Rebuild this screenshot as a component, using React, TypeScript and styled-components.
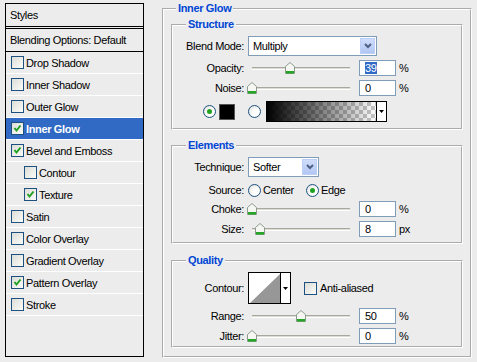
import React from 'react';
import styled, { createGlobalStyle } from 'styled-components';

const GlobalStyle = createGlobalStyle`
  html, body {
    margin: 0;
    padding: 0;
  }
  body {
    background: #ececec;
    font-family: "Liberation Sans", Arial, sans-serif;
    font-size: 11px;
    letter-spacing: -0.35px;
    color: #000;
  }
`;

const Dialog = styled.div`
  width: 477px;
  height: 362px;
  box-sizing: border-box;
  padding: 2px 0 0 5px;
  display: flex;
  align-items: flex-start;
  overflow: hidden;
`;

/* ---------- left list ---------- */

const StylesPanel = styled.div`
  margin-top: 1px;
  width: 139px;
  height: 354px;
  box-sizing: border-box;
  border: 1px solid #000;
  display: flex;
  flex-direction: column;
`;

const PanelHead = styled.div`
  height: 22px;
  line-height: 22px;
  padding-left: 4px;
  border-bottom: 1px solid #000;
  margin-bottom: 1px;
`;

const BlendRow = styled.div`
  height: 22px;
  line-height: 22px;
  padding-left: 4px;
  border-top: 1px solid #000;
  border-bottom: 1px solid #000;
`;

const StyleItem = styled.div<{ $indent?: boolean; $active?: boolean }>`
  height: 21px;
  border-bottom: 1px solid #fff;
  display: flex;
  align-items: center;
  gap: 2px;
  padding-left: ${(p) => (p.$indent ? 18 : 5)}px;
  background: ${(p) => (p.$active ? '#316ac5' : 'transparent')};
  color: ${(p) => (p.$active ? '#fff' : '#000')};
  font-weight: ${(p) => (p.$active ? 'bold' : 'normal')};
`;

const CheckBox = styled.span`
  width: 13px;
  height: 13px;
  box-sizing: border-box;
  border: 1px solid #1c5180;
  background: linear-gradient(135deg, #dcdcd7, #fbfbf9);
  display: inline-flex;
  align-items: center;
  justify-content: center;
  flex: none;
`;

const Check = ({ on }: { on?: boolean }) => (
  <CheckBox>
    {on && (
      <svg width="9" height="9" viewBox="0 0 9 9">
        <polyline points="1.5,4 3.5,6.5 7.5,1.5" fill="none" stroke="#21a121" strokeWidth="2" />
      </svg>
    )}
  </CheckBox>
);

/* ---------- right groups ---------- */

const Group = styled.fieldset`
  margin: 0 0 0 18px;
  width: 310px;
  height: 356px;
  min-width: 0;
  box-sizing: border-box;
  border: 2px groove #fff;
  padding: 3px 7px 0 7px;
`;

const SubGroup = styled.fieldset<{ $mt?: number; $pb: number }>`
  margin: ${(p) => p.$mt ?? 0}px 0 0 0;
  min-width: 0;
  border: 2px groove #fff;
  padding: 0 0 ${(p) => p.$pb}px 0;
`;

const Legend = styled.legend<{ $ml: number }>`
  font-weight: bold;
  color: #0046d5;
  padding: 0 2px;
  margin-left: ${(p) => p.$ml}px;
  line-height: 13px;
`;

const Row = styled.div<{ $mt: number; $h: number }>`
  margin-top: ${(p) => p.$mt}px;
  height: ${(p) => p.$h}px;
  display: flex;
  align-items: center;
`;

const Label = styled.span`
  width: 71px;
  margin-right: 4px;
  text-align: right;
  flex: none;
`;

const Select = styled.div<{ $w: number }>`
  width: ${(p) => p.$w}px;
  height: 20px;
  box-sizing: border-box;
  border: 1px solid #7f9db9;
  background: #fff;
  display: flex;
  align-items: center;
  padding-left: 4px;
`;

const SelectText = styled.span`
  flex: 1;
`;

const DropBtn = styled.span`
  width: 15px;
  height: 16px;
  margin-right: 1px;
  box-sizing: border-box;
  background: linear-gradient(#cfdcfb, #b3c7f4);
  border: 1px solid #bccff6;
  display: flex;
  align-items: center;
  justify-content: center;
`;

const Chevron = () => (
  <svg width="8" height="6" viewBox="0 0 8 6">
    <polyline points="1,1 4,4 7,1" fill="none" stroke="#4d6185" strokeWidth="2" />
  </svg>
);

const SliderBox = styled.div`
  position: relative;
  width: 108px;
  height: 16px;
  margin-right: 3px;
  flex: none;
`;

const Track = styled.div`
  position: absolute;
  left: 4px;
  width: 98px;
  top: 7px;
  height: 1px;
  border-top: 1px solid #a8a8a0;
  border-bottom: 1px solid #fff;
  background: #dcdcd4;
`;

const Thumb = styled.svg`
  position: absolute;
  top: 2px;
`;

const Slider = ({ at }: { at: number }) => (
  <SliderBox>
    <Track />
    <Thumb width="10" height="12" viewBox="0 0 10 12" style={{ left: 4 + at * 98 - 5 }}>
      <path d="M0.5,4.5 L5,0.5 L9.5,4.5 L9.5,11.5 L0.5,11.5 Z" fill="#f6f6f2" stroke="#8c9a8e" />
      <rect x="1" y="9" width="8" height="2.5" fill="#25a525" />
    </Thumb>
  </SliderBox>
);

const NumBox = styled.div`
  width: 37px;
  height: 16px;
  box-sizing: border-box;
  border: 1px solid #7f9db9;
  background: #fff;
  padding-left: 5px;
  line-height: 14px;
  flex: none;
`;

const Picked = styled.span`
  background: #316ac5;
  color: #fff;
`;

const Unit = styled.span`
  margin-left: 3px;
`;

const RadioDot = styled.span<{ $on?: boolean }>`
  width: 13px;
  height: 13px;
  box-sizing: border-box;
  border-radius: 50%;
  border: 1px solid #1c5180;
  background: radial-gradient(circle at 65% 65%, #fff 30%, #dcdcd7);
  display: inline-flex;
  align-items: center;
  justify-content: center;
  flex: none;
  &::after {
    content: '';
    width: 5px;
    height: 5px;
    border-radius: 50%;
    background: ${(p) => (p.$on ? '#21a121' : 'transparent')};
  }
`;

const Choice = styled.span<{ $ml?: number }>`
  display: inline-flex;
  align-items: center;
  gap: 2px;
  margin-left: ${(p) => p.$ml ?? 0}px;
`;

const Swatch = styled.span`
  width: 16px;
  height: 16px;
  box-sizing: border-box;
  border: 1px solid #555;
  background: #000;
  margin: 0 13px 0 3px;
`;

const GradientPick = styled.div`
  width: 121px;
  height: 21px;
  margin-left: 5px;
  box-sizing: border-box;
  border: 1px solid #000;
  display: flex;
`;

const GradientFill = styled.div`
  flex: 1;
  background: linear-gradient(to right, #000, rgba(0, 0, 0, 0)),
    repeating-conic-gradient(#c8c8c8 0 25%, #fff 0 50%) 0 0 / 8px 8px;
`;

const ArrowPart = styled.div`
  width: 9px;
  border-left: 1px solid #000;
  background: #fff;
  display: flex;
  align-items: center;
  justify-content: center;
`;

const DownTri = () => (
  <svg width="5" height="3" viewBox="0 0 5 3">
    <polygon points="0,0 5,0 2.5,3" fill="#000" />
  </svg>
);

const ContourPick = styled.div`
  width: 43px;
  height: 32px;
  box-sizing: border-box;
  border: 1px solid #000;
  display: flex;
  flex: none;
`;

const ContourPreview = styled.svg`
  flex: 1;
  background: #fff;
`;

const CheckChoice = styled.span`
  display: inline-flex;
  align-items: center;
  gap: 3px;
  margin-left: 13px;
`;

const Inset = styled.span<{ $w: number }>`
  width: ${(p) => p.$w}px;
  flex: none;
`;

const items = [
  { name: 'Drop Shadow' },
  { name: 'Inner Shadow' },
  { name: 'Outer Glow' },
  { name: 'Inner Glow', on: true, active: true },
  { name: 'Bevel and Emboss', on: true },
  { name: 'Contour', indent: true },
  { name: 'Texture', on: true, indent: true },
  { name: 'Satin' },
  { name: 'Color Overlay' },
  { name: 'Gradient Overlay' },
  { name: 'Pattern Overlay', on: true },
  { name: 'Stroke' },
];

const App = () => {
  return (
    <>
      <GlobalStyle />
      <Dialog>
        <StylesPanel>
          <PanelHead>Styles</PanelHead>
          <BlendRow>Blending Options: Default</BlendRow>
          {items.map((it) => (
            <StyleItem key={it.name} $indent={it.indent} $active={it.active}>
              <Check on={it.on} />
              <span>{it.name}</span>
            </StyleItem>
          ))}
        </StylesPanel>

        <Group>
          <Legend $ml={5}>Inner Glow</Legend>

          <SubGroup $pb={6}>
            <Legend $ml={13}>Structure</Legend>
            <Row $mt={5} $h={20}>
              <Label>Blend Mode:</Label>
              <Select $w={129}>
                <SelectText>Multiply</SelectText>
                <DropBtn>
                  <Chevron />
                </DropBtn>
              </Select>
            </Row>
            <Row $mt={4} $h={16}>
              <Label>Opacity:</Label>
              <Slider at={0.39} />
              <NumBox>
                <Picked>39</Picked>
              </NumBox>
              <Unit>%</Unit>
            </Row>
            <Row $mt={4} $h={16}>
              <Label>Noise:</Label>
              <Slider at={0} />
              <NumBox>0</NumBox>
              <Unit>%</Unit>
            </Row>
            <Row $mt={5} $h={21}>
              <Inset $w={30} />
              <RadioDot $on />
              <Swatch />
              <RadioDot />
              <GradientPick>
                <GradientFill />
                <ArrowPart>
                  <DownTri />
                </ArrowPart>
              </GradientPick>
            </Row>
          </SubGroup>

          <SubGroup $mt={9} $pb={5}>
            <Legend $ml={13}>Elements</Legend>
            <Row $mt={5} $h={20}>
              <Label>Technique:</Label>
              <Select $w={71}>
                <SelectText>Softer</SelectText>
                <DropBtn>
                  <Chevron />
                </DropBtn>
              </Select>
            </Row>
            <Row $mt={5} $h={16}>
              <Label>Source:</Label>
              <Choice>
                <RadioDot />
                Center
              </Choice>
              <Choice $ml={12}>
                <RadioDot $on />
                Edge
              </Choice>
            </Row>
            <Row $mt={3} $h={16}>
              <Label>Choke:</Label>
              <Slider at={0} />
              <NumBox>0</NumBox>
              <Unit>%</Unit>
            </Row>
            <Row $mt={4} $h={16}>
              <Label>Size:</Label>
              <Slider at={0.08} />
              <NumBox>8</NumBox>
              <Unit>px</Unit>
            </Row>
          </SubGroup>

          <SubGroup $mt={10} $pb={2}>
            <Legend $ml={13}>Quality</Legend>
            <Row $mt={5} $h={32}>
              <Label>Contour:</Label>
              <ContourPick>
                <ContourPreview viewBox="0 0 30 30" preserveAspectRatio="none">
                  <polygon points="1,30 30,1 30,30" fill="#979797" />
                </ContourPreview>
                <ArrowPart>
                  <DownTri />
                </ArrowPart>
              </ContourPick>
              <CheckChoice>
                <Check />
                Anti-aliased
              </CheckChoice>
            </Row>
            <Row $mt={4} $h={16}>
              <Label>Range:</Label>
              <Slider at={0.5} />
              <NumBox>50</NumBox>
              <Unit>%</Unit>
            </Row>
            <Row $mt={4} $h={16}>
              <Label>Jitter:</Label>
              <Slider at={0} />
              <NumBox>0</NumBox>
              <Unit>%</Unit>
            </Row>
          </SubGroup>
        </Group>
      </Dialog>
    </>
  );
};

export default App;
